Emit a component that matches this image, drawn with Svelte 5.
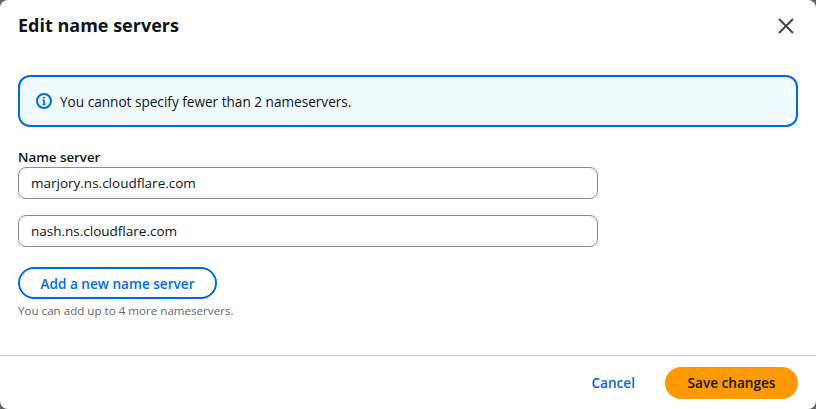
<script>
	let servers = $state(['marjory.ns.cloudflare.com', 'nash.ns.cloudflare.com']);
</script>

<div class="modal">
	<header>
		<h2>Edit name servers</h2>
		<button class="close" aria-label="Close">
			<svg width="18" height="18" viewBox="0 0 18 18" fill="none" stroke="#424650" stroke-width="2">
				<path d="M2 2l14 14M16 2L2 16" />
			</svg>
		</button>
	</header>

	<div class="body">
		<div class="alert">
			<svg width="16" height="16" viewBox="0 0 16 16" fill="none" stroke="#006ce0" stroke-width="2">
				<circle cx="8" cy="8" r="7" />
				<path d="M8 11.5V7M6.5 7H8M6.5 11.5h3" stroke-width="1.6" />
				<path d="M8 3.8v1.6" stroke-width="1.8" />
			</svg>
			<span>You cannot specify fewer than 2 nameservers.</span>
		</div>

		<div class="label">Name server</div>
		<div class="fields">
			{#each servers as s, i}
				<input type="text" bind:value={servers[i]} />
			{/each}
		</div>

		<button class="add">Add a new name server</button>
		<p class="hint">You can add up to 4 more nameservers.</p>
	</div>

	<footer>
		<button class="cancel">Cancel</button>
		<button class="save">Save changes</button>
	</footer>
</div>

<style>
	:global(body) {
		background: #5f6268;
		font-family: "Open Sans", "Noto Sans", sans-serif;
	}
	.modal {
		width: 816px;
		height: 409px;
		box-sizing: border-box;
		background: #fff;
		border-radius: 8px;
		display: flex;
		flex-direction: column;
		color: #0f141a;
		overflow: hidden;
	}
	header {
		display: flex;
		justify-content: space-between;
		align-items: center;
		padding: 6px 21px 0 18px;
		height: 40px;
		box-sizing: content-box;
	}
	h2 {
		margin: 0 0 2px;
		font-size: 18px;
		line-height: 26px;
		font-weight: 700;
	}
	.close {
		background: none;
		border: 0;
		padding: 0;
		width: 18px;
		height: 18px;
		display: flex;
	}
	.body {
		flex: 1;
		padding: 29px 18px 0;
	}
	.alert {
		display: flex;
		align-items: center;
		gap: 8px;
		box-sizing: border-box;
		height: 52px;
		padding: 0 16px;
		border: 2px solid #006ce0;
		border-radius: 12px;
		background: #f0fbff;
		font-size: 13.6px;
	}
	.label {
		margin: 22px 0 2px;
		font-size: 13.3px;
		line-height: 16px;
		font-weight: 600;
	}
	.fields {
		display: flex;
		flex-direction: column;
		gap: 16px;
	}
	input {
		width: 580px;
		height: 32px;
		box-sizing: border-box;
		border: 1px solid #8c8c94;
		border-radius: 8px;
		padding: 0 12px;
		font: 13.5px "Open Sans", "Noto Sans", sans-serif;
		color: #0f141a;
		background: #fff;
		outline: none;
	}
	button {
		font-family: inherit;
		cursor: pointer;
	}
	.add {
		display: block;
		margin-top: 20px;
		width: 199px;
		height: 32px;
		border: 2px solid #006ce0;
		border-radius: 16px;
		background: #fff;
		color: #006ce0;
		font-size: 13.6px;
		font-weight: 600;
		padding: 0;
	}
	.hint {
		margin: 4px 0 0;
		font-size: 11.6px;
		line-height: 16px;
		color: #656871;
	}
	footer {
		border-top: 1px solid #c6c6cd;
		height: 53px;
		display: flex;
		justify-content: flex-end;
		align-items: center;
		gap: 30px;
		padding: 0 18px 0 0;
	}
	.cancel {
		background: none;
		border: 0;
		padding: 0;
		color: #006ce0;
		font-size: 13.6px;
		font-weight: 600;
	}
	.save {
		width: 133px;
		height: 32px;
		border: 0;
		border-radius: 16px;
		background: #ff9900;
		color: #0f141a;
		font-size: 13.6px;
		font-weight: 600;
		padding: 0;
	}
</style>
